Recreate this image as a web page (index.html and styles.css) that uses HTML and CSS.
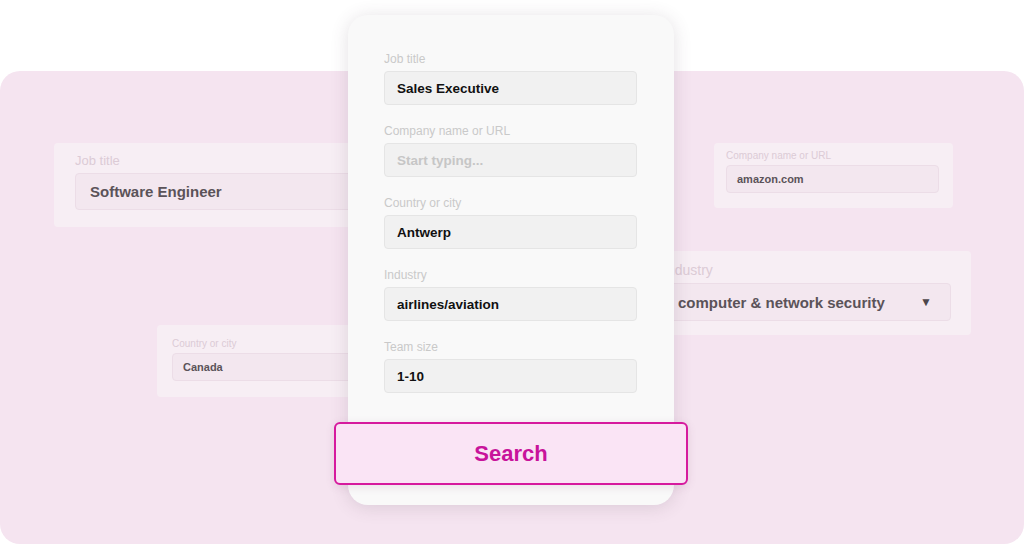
FILE: index.html
```html
<!DOCTYPE html>
<html lang="en">
<head>
    <meta charset="UTF-8">
    <meta name="viewport" content="width=device-width, initial-scale=1.0">
    <title>Search</title>
    <link rel="stylesheet" href="styles.css">
</head>
<body>
    <div class="stage">
        <div class="panel"></div>

        <!-- faded cards behind the form -->
        <div class="ghost ghost-job">
            <div class="ghost-label">Job title</div>
            <div class="ghost-input">Software Engineer</div>
        </div>
        <div class="ghost ghost-country">
            <div class="ghost-label">Country or city</div>
            <div class="ghost-input">Canada</div>
        </div>
        <div class="ghost ghost-company">
            <div class="ghost-label">Company name or URL</div>
            <div class="ghost-input">amazon.com</div>
        </div>
        <div class="ghost ghost-industry">
            <div class="ghost-label">Industry</div>
            <div class="ghost-input">
                <span>computer &amp; network security</span>
                <span class="arrow">&#9660;</span>
            </div>
        </div>

        <!-- main form -->
        <div class="form">
            <div class="field">
                <div class="label">Job title</div>
                <div class="input">Sales Executive</div>
            </div>
            <div class="field">
                <div class="label">Company name or URL</div>
                <div class="input placeholder">Start typing...</div>
            </div>
            <div class="field">
                <div class="label">Country or city</div>
                <div class="input">Antwerp</div>
            </div>
            <div class="field">
                <div class="label">Industry</div>
                <div class="input">airlines/aviation</div>
            </div>
            <div class="field">
                <div class="label">Team size</div>
                <div class="input">1-10</div>
            </div>
        </div>

        <button class="search">Search</button>
    </div>
</body>
</html>
```

FILE: styles.css
```css
body {
    margin: 0;
    background-color: #ffffff;
    font-family: "Liberation Sans", Arial, sans-serif;
}
.stage {
    position: relative;
    width: 1024px;
    height: 544px;
    overflow: hidden;
}
.panel {
    margin-top: 71px;
    height: 473px;
    background-color: #f5e4f0;
    border-radius: 20px;
}

/* background cards */
.ghost {
    position: absolute;
    background-color: #f7eef4;
    border-radius: 4px;
    box-sizing: border-box;
}
.ghost-label {
    color: #dccbd6;
}
.ghost-input {
    background-color: #f3e7ef;
    border: 1px solid #ecdde7;
    border-radius: 4px;
    box-sizing: border-box;
    color: #5b5359;
    font-weight: bold;
    display: flex;
    align-items: center;
}
.ghost-job {
    left: 54px;
    top: 143px;
    width: 380px;
    height: 84px;
    padding: 10px 21px;
}
.ghost-job .ghost-label {
    font-size: 13px;
    line-height: 16px;
    margin-bottom: 4px;
}
.ghost-job .ghost-input {
    height: 37px;
    padding-left: 14px;
    font-size: 15px;
}
.ghost-country {
    left: 157px;
    top: 325px;
    width: 260px;
    height: 72px;
    padding: 13px 15px;
}
.ghost-country .ghost-label {
    font-size: 10px;
    line-height: 12px;
    margin-bottom: 3px;
}
.ghost-country .ghost-input {
    height: 28px;
    padding-left: 10px;
    font-size: 11px;
}
.ghost-company {
    left: 714px;
    top: 143px;
    width: 239px;
    height: 65px;
    padding: 7px 14px 0 12px;
}
.ghost-company .ghost-label {
    font-size: 10px;
    line-height: 12px;
    margin-bottom: 3px;
}
.ghost-company .ghost-input {
    height: 28px;
    padding-left: 10px;
    font-size: 11px;
}
.ghost-industry {
    left: 642px;
    top: 251px;
    width: 329px;
    height: 84px;
    padding: 11px 20px 0 21px;
}
.ghost-industry .ghost-label {
    font-size: 14px;
    line-height: 16px;
    margin-bottom: 5px;
}
.ghost-industry .ghost-input {
    height: 38px;
    padding: 0 18px 0 14px;
    font-size: 15px;
    justify-content: space-between;
}
.arrow {
    font-size: 12px;
    color: #4d464b;
}

/* main form */
.form {
    position: absolute;
    left: 348px;
    top: 15px;
    width: 326px;
    height: 490px;
    box-sizing: border-box;
    padding: 37px 37px 0 36px;
    background-color: #f9f9f9;
    border-radius: 20px;
    box-shadow: 0 2px 18px rgba(80, 60, 80, 0.16);
    display: flex;
    flex-direction: column;
    gap: 19px;
}
.label {
    font-size: 12px;
    line-height: 14px;
    color: #c9c9c9;
    margin-bottom: 5px;
}
.input {
    height: 34px;
    box-sizing: border-box;
    padding-left: 12px;
    background-color: #f1f1f1;
    border: 1px solid #e5e5e5;
    border-radius: 4px;
    display: flex;
    align-items: center;
    font-size: 13.5px;
    font-weight: bold;
    color: #111111;
}
.input.placeholder {
    color: #c6c6c6;
}
.search {
    position: absolute;
    left: 334px;
    top: 422px;
    width: 354px;
    height: 63px;
    background-color: #fae4f5;
    border: 2px solid #d61a9e;
    border-radius: 6px;
    font-family: "Liberation Sans", Arial, sans-serif;
    font-size: 22px;
    font-weight: bold;
    color: #c8139b;
    cursor: pointer;
    box-shadow: 0 2px 10px rgba(120, 60, 110, 0.12);
}
```
